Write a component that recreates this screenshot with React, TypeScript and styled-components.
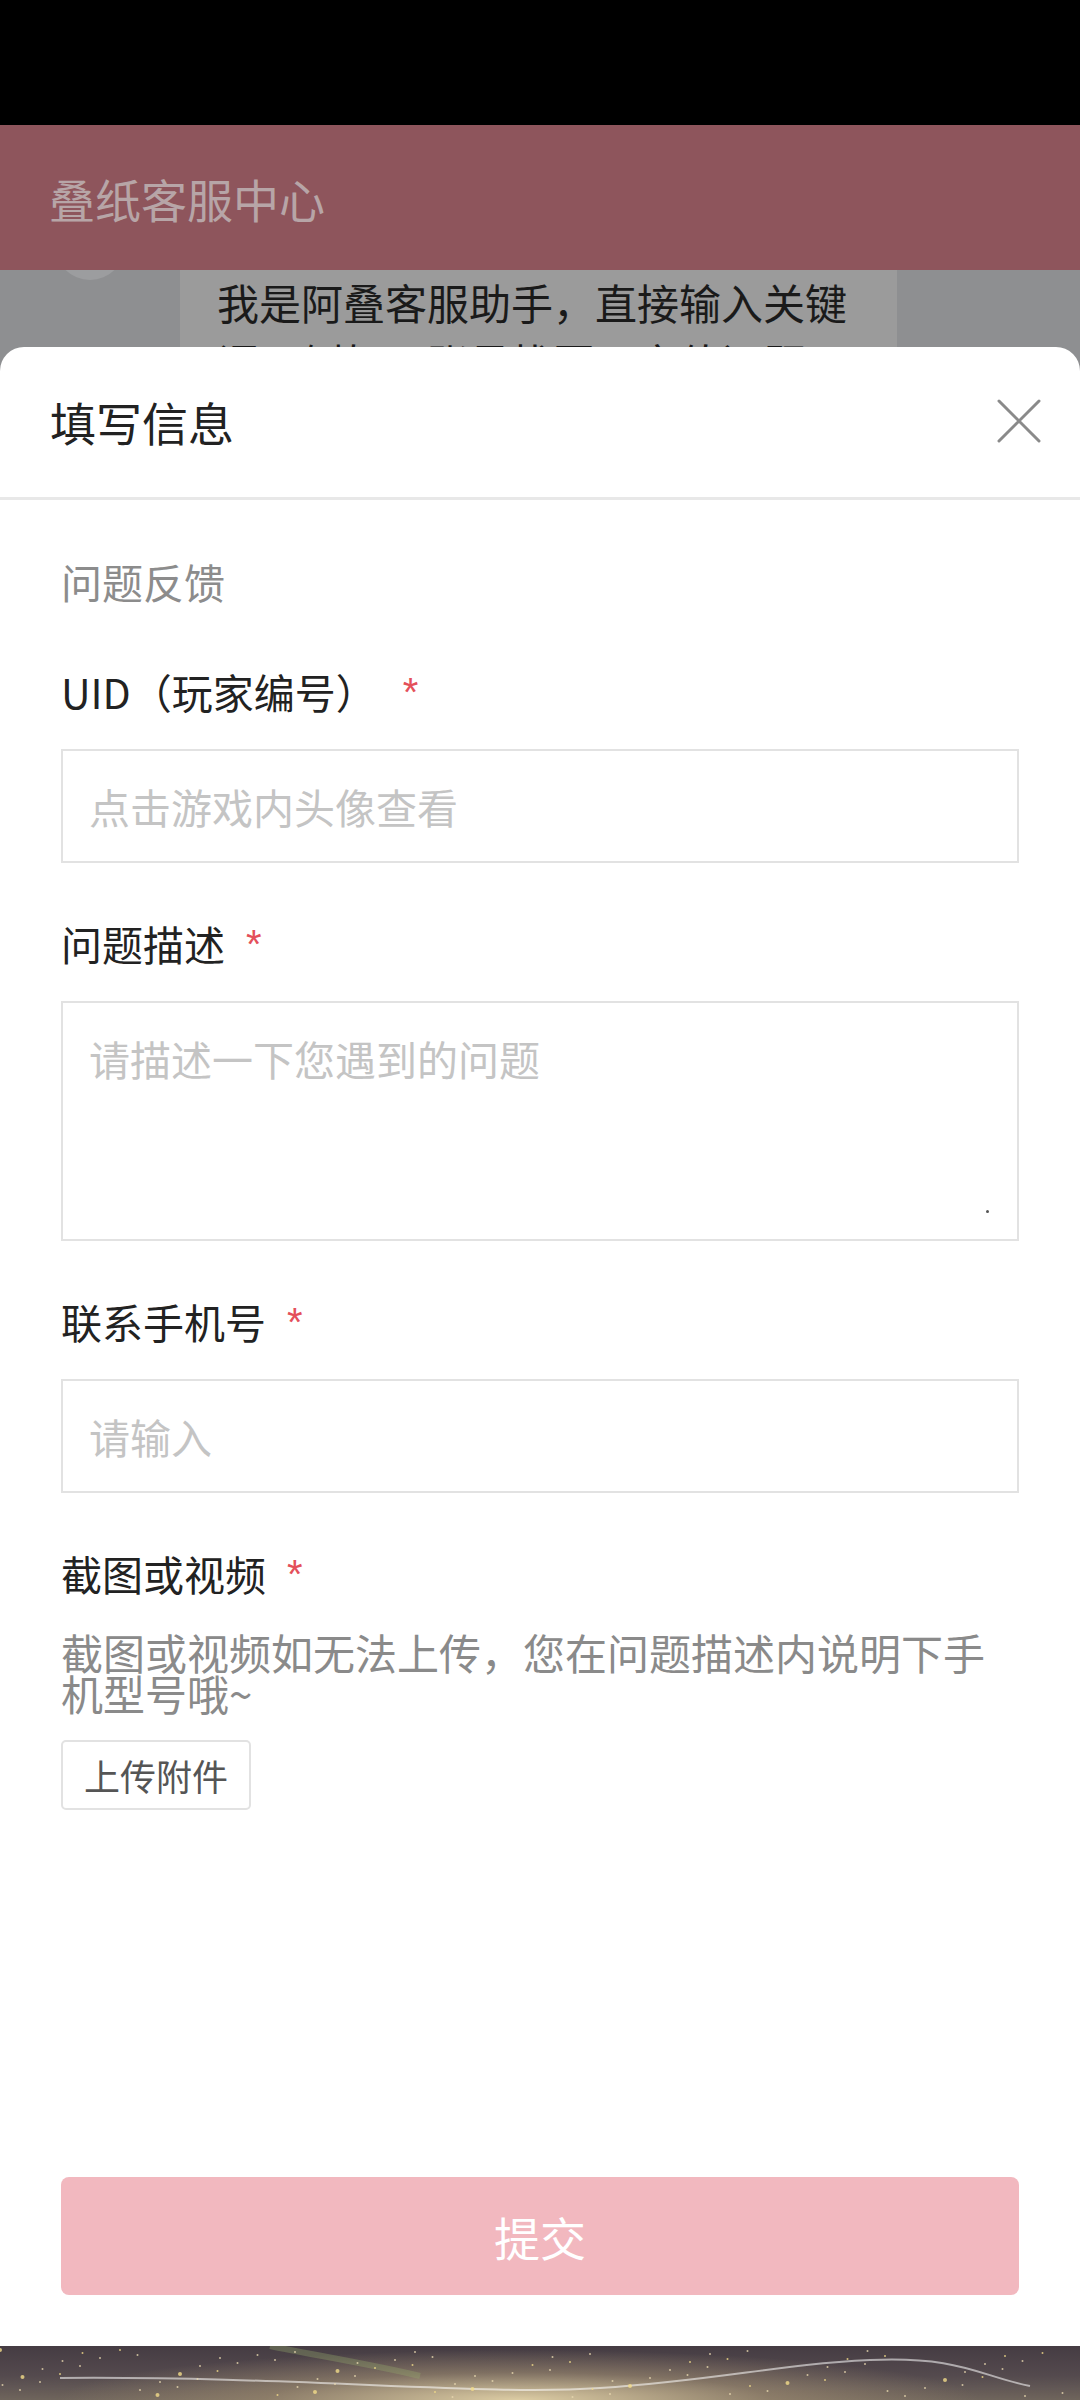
import React from "react";
import styled, { createGlobalStyle } from "styled-components";

const GlobalStyle = createGlobalStyle`
  html, body {
    margin: 0;
    padding: 0;
    background: #000;
  }
  * {
    box-sizing: border-box;
  }
  body {
    font-family: "Noto Sans CJK SC", "Noto Sans", sans-serif;
  }
`;

const Page = styled.div`
  position: relative;
  width: 1080px;
  height: 2400px;
  display: flex;
  flex-direction: column;
  overflow: hidden;
  background: #8e8f91;
`;

const StatusBar = styled.div`
  height: 125px;
  background: #000;
  flex-shrink: 0;
`;

const TopBar = styled.div`
  position: relative;
  z-index: 1;
  height: 145px;
  flex-shrink: 0;
  display: flex;
  align-items: center;
  padding-left: 49px;
  background: #8e555c;
  color: #b7a5a7;
  font-size: 46px;
  line-height: 60px;
`;

const ChatArea = styled.div`
  flex: 1;
  display: flex;
  align-items: flex-start;
  padding-left: 55px;
`;

const Avatar = styled.div`
  width: 70px;
  height: 70px;
  margin-top: -60px;
  border-radius: 50%;
  background: #9c9d9f;
  flex-shrink: 0;
`;

const Bubble = styled.div`
  width: 717px;
  margin-left: 55px;
  padding: 2px 30px 20px 37px;
  background: #9b9b9b;
  color: #1a1a1a;
  font-size: 42px;
  line-height: 60px;
`;

const BottomStrip = styled.div`
  height: 54px;
  flex-shrink: 0;
  background:
    radial-gradient(ellipse 460px 50px at 48% 100%, rgba(226, 210, 168, 0.95), rgba(170, 150, 118, 0.5) 55%, transparent 100%),
    linear-gradient(180deg, #453c43 0%, #544a4e 55%, #6f655c 100%);
  svg {
    display: block;
  }
`;

const Sheet = styled.div`
  position: absolute;
  z-index: 2;
  top: 347px;
  left: 0;
  right: 0;
  bottom: 54px;
  display: flex;
  flex-direction: column;
  background: #fff;
  border-radius: 24px 24px 0 0;
`;

const SheetHeader = styled.div`
  height: 153px;
  flex-shrink: 0;
  display: flex;
  align-items: center;
  justify-content: space-between;
  padding: 0 38px 3px 50px;
  border-bottom: 3px solid #e8e8e8;
`;

const SheetTitle = styled.div`
  font-size: 46px;
  line-height: 60px;
  color: #222;
`;

const CloseButton = styled.button`
  width: 46px;
  height: 46px;
  padding: 0;
  border: none;
  background: none;
  svg {
    display: block;
  }
`;

const Body = styled.div`
  flex: 1;
  display: flex;
  flex-direction: column;
  padding: 53px 61px 51px;
`;

const SectionTitle = styled.div`
  font-size: 41px;
  line-height: 56px;
  color: #8c8c8c;
  margin-bottom: 54px;
`;

const Field = styled.div`
  margin-bottom: 52px;
  &:last-of-type {
    margin-bottom: 0;
  }
`;

const Label = styled.div`
  display: flex;
  align-items: flex-start;
  font-size: 41px;
  line-height: 56px;
  color: #222;
  margin-bottom: 30px;
`;

const Star = styled.span<{ $gap: number }>`
  margin-left: ${({ $gap }) => $gap}px;
  margin-top: 4px;
  color: #e4505a;
  font-family: "Liberation Sans", sans-serif;
  font-size: 40px;
  line-height: 50px;
`;

const TextInput = styled.input`
  display: block;
  width: 100%;
  height: 114px;
  padding: 0 26px;
  border: 2px solid #e2e2e2;
  border-radius: 0;
  outline: none;
  font-family: inherit;
  font-size: 41px;
  color: #222;
  &::placeholder {
    color: #c4c4c4;
  }
`;

const AreaWrap = styled.div`
  position: relative;
`;

const TextArea = styled.textarea`
  display: block;
  width: 100%;
  height: 240px;
  padding: 27px 26px;
  border: 2px solid #e2e2e2;
  border-radius: 0;
  outline: none;
  resize: none;
  font-family: inherit;
  font-size: 41px;
  line-height: 56px;
  color: #222;
  &::placeholder {
    color: #c4c4c4;
  }
`;

const ResizeDot = styled.span`
  position: absolute;
  right: 30px;
  bottom: 28px;
  width: 3px;
  height: 3px;
  border-radius: 50%;
  background: #555;
`;

const Hint = styled.div`
  font-size: 42px;
  line-height: 41px;
  color: #8a8a8a;
  margin-bottom: 27px;
`;

const UploadButton = styled.button`
  width: 190px;
  height: 70px;
  padding: 0;
  border: 2px solid #e2e2e2;
  border-radius: 5px;
  background: #fff;
  font-family: inherit;
  font-size: 36px;
  color: #555;
`;

const SubmitButton = styled.button`
  margin-top: auto;
  width: 100%;
  height: 118px;
  border: none;
  border-radius: 8px;
  background: #f2b8bf;
  color: #fff;
  font-family: inherit;
  font-size: 46px;
`;

const sparkles = Array.from({ length: 90 }).map((_, i) => {
  const x = (i * 137.5) % 1080;
  const y = 4 + ((i * 53) % 48);
  const r = i % 9 === 0 ? 2 : 1;
  return { x, y, r };
});

export default function App() {
  return (
    <>
      <GlobalStyle />
      <Page>
        <StatusBar />
        <TopBar>叠纸客服中心</TopBar>
        <ChatArea>
          <Avatar />
          <Bubble>
            我是阿叠客服助手，直接输入关键
            <br />
            词，例如：账号找回、充值问题
          </Bubble>
        </ChatArea>
        <BottomStrip>
          <svg width="1080" height="54" viewBox="0 0 1080 54">
            <path
              d="M60 32 C 300 30, 480 50, 600 42 S 780 18, 870 14 S 980 30, 1030 40"
              fill="none"
              stroke="rgba(255,255,255,0.55)"
              strokeWidth="2"
            />
            <path
              d="M270 0 C 320 10, 380 20, 420 30"
              fill="none"
              stroke="rgba(150,170,110,0.35)"
              strokeWidth="6"
            />
            {sparkles.map((s, i) => (
              <circle
                key={i}
                cx={s.x}
                cy={s.y}
                r={s.r}
                fill={i % 3 === 0 ? "#f3dc8a" : "#e8d8b0"}
                opacity={0.8}
              />
            ))}
          </svg>
        </BottomStrip>

        <Sheet>
          <SheetHeader>
            <SheetTitle>填写信息</SheetTitle>
            <CloseButton aria-label="关闭">
              <svg width="46" height="46" viewBox="0 0 46 46">
                <path d="M3 3 L43 43 M43 3 L3 43" stroke="#8a8a8a" strokeWidth="3" strokeLinecap="round" />
              </svg>
            </CloseButton>
          </SheetHeader>
          <Body>
            <SectionTitle>问题反馈</SectionTitle>

            <Field>
              <Label>
                UID（玩家编号）<Star $gap={26}>*</Star>
              </Label>
              <TextInput placeholder="点击游戏内头像查看" />
            </Field>

            <Field>
              <Label>
                问题描述<Star $gap={21}>*</Star>
              </Label>
              <AreaWrap>
                <TextArea placeholder="请描述一下您遇到的问题" />
                <ResizeDot />
              </AreaWrap>
            </Field>

            <Field>
              <Label>
                联系手机号<Star $gap={21}>*</Star>
              </Label>
              <TextInput placeholder="请输入" />
            </Field>

            <Field>
              <Label>
                截图或视频<Star $gap={21}>*</Star>
              </Label>
              <Hint>截图或视频如无法上传，您在问题描述内说明下手机型号哦~</Hint>
              <UploadButton>上传附件</UploadButton>
            </Field>

            <SubmitButton>提交</SubmitButton>
          </Body>
        </Sheet>
      </Page>
    </>
  );
}
